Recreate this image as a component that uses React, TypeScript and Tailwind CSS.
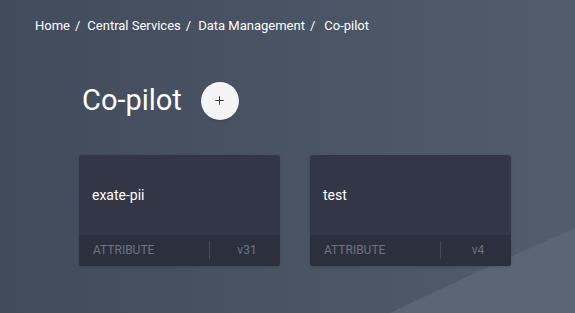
import { Plus } from "lucide-react";

interface Item {
  name: string;
  kind: string;
  version: string;
}

const items: Item[] = [
  { name: "exate-pii", kind: "ATTRIBUTE", version: "v31" },
  { name: "test", kind: "ATTRIBUTE", version: "v4" },
];

const crumbs = ["Home", "Central Services", "Data Management"];

const Card = ({ item }: { item: Item }) => (
  <div className="w-[201px] h-[111px] rounded-[3px] bg-[#323646] flex flex-col overflow-hidden shadow-sm">
    <div className="flex-1 flex items-center px-[13px] pt-[1px] text-[14px] text-white">
      {item.name}
    </div>
    <div className="h-[31px] bg-[#2c303e] flex items-center text-[12px] text-[#6c7384]">
      <span className="w-[130px] pl-[14px]">{item.kind}</span>
      <span className="h-[18px] w-px bg-[#454a5c]"></span>
      <span className="flex-1 text-center pl-[4px]">{item.version}</span>
    </div>
  </div>
);

export default function App() {
  return (
    <div
      className="relative w-[575px] h-[313px] overflow-hidden bg-gradient-to-r from-[#414b5b] to-[#515c6c]"
      style={{ fontFamily: "Roboto, 'Liberation Sans', sans-serif" }}
    >
      {/* background wave */}
      <svg
        className="absolute inset-0"
        width="575"
        height="313"
        viewBox="0 0 575 313"
      >
        <path d="M390 313 Q480 270 575 228 L575 313 Z" fill="#5a6676" />
      </svg>

      <div className="relative">
        {/* breadcrumb */}
        <nav className="flex items-center pl-[35px] pt-[16px] text-[13px] text-white">
          {crumbs.map((c) => (
            <span key={c} className="flex items-center">
              <span>{c}</span>
              <span className="ml-[5px] mr-[7px]">/</span>
            </span>
          ))}
          <span className="ml-[2px]">Co-pilot</span>
        </nav>

        {/* header */}
        <div className="flex items-center pl-[82px] mt-[46px]">
          <h1 className="text-[29px] leading-none text-white font-normal">
            Co-pilot
          </h1>
          <button className="ml-[19px] w-[38px] h-[38px] rounded-full bg-[#f4f4f4] flex items-center justify-center text-[#333] shadow">
            <Plus size={13} strokeWidth={1.8} />
          </button>
        </div>

        {/* cards */}
        <div className="flex gap-[30px] pl-[79px] mt-[35px]">
          {items.map((it) => (
            <Card key={it.name} item={it} />
          ))}
        </div>
      </div>
    </div>
  );
}
